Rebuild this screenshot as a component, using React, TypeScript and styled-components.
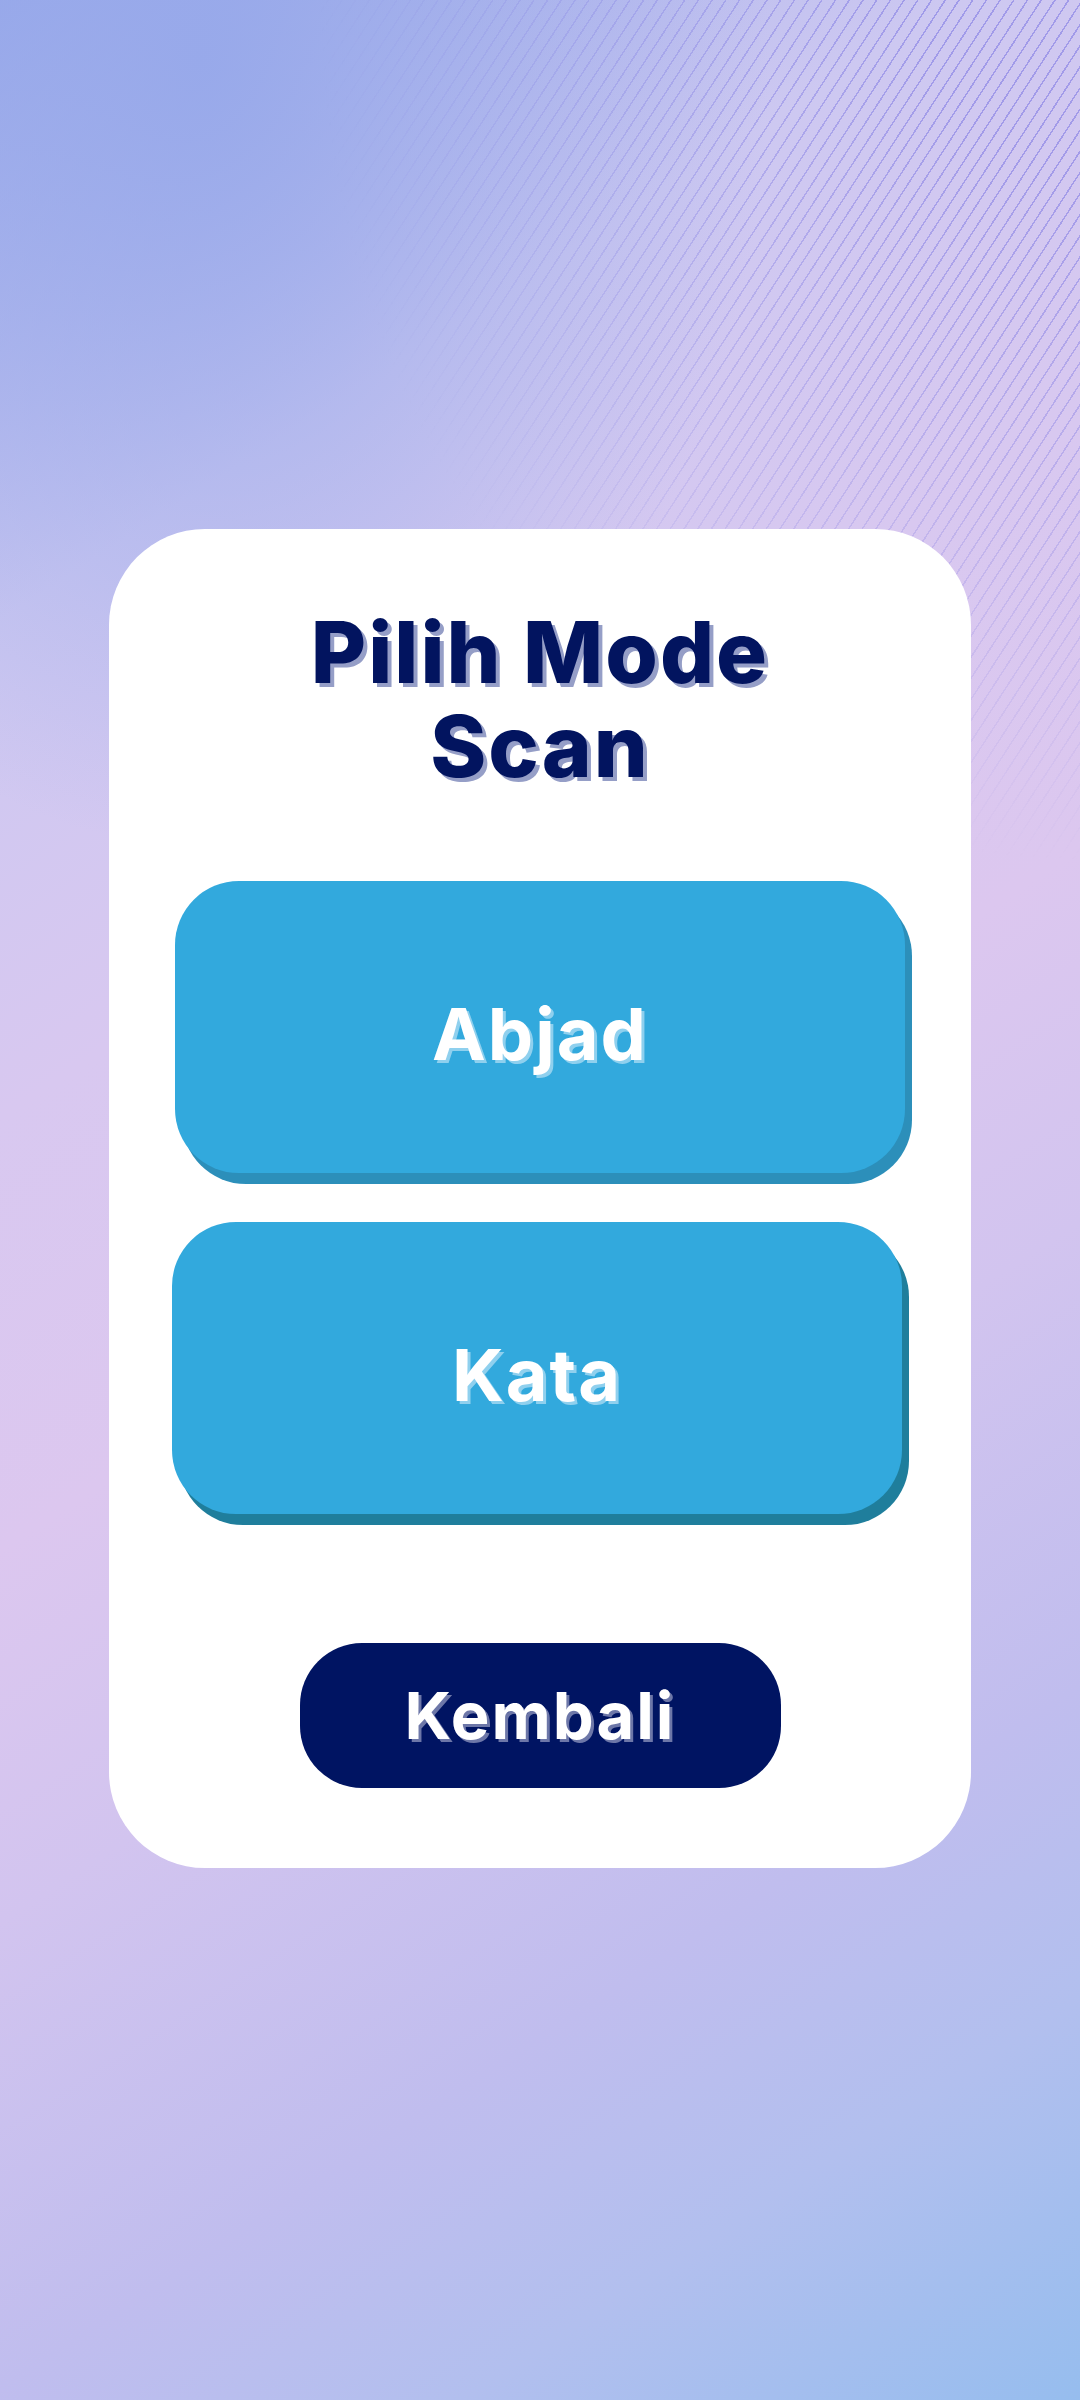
import { createGlobalStyle, styled } from 'styled-components';

const GlobalStyle = createGlobalStyle`
  * {
    box-sizing: border-box;
  }
  body {
    margin: 0;
    font-family: Inter, 'Noto Sans', sans-serif;
  }
`;

const modes = [
  { label: 'Abjad', shade: '#2c8fba', shift: 0 },
  { label: 'Kata', shade: '#1f7e9c', shift: -3 },
];

export default function App() {
  return (
    <>
      <GlobalStyle />
      <Page>
        <Card>
          <Title>Pilih Mode Scan</Title>
          <ModeList>
            {modes.map((mode) => (
              <ModeButton key={mode.label} type="button" $shade={mode.shade} $shift={mode.shift}>
                {mode.label}
              </ModeButton>
            ))}
          </ModeList>
          <BackButton type="button">Kembali</BackButton>
        </Card>
      </Page>
    </>
  );
}

const Page = styled.div`
  position: relative;
  min-height: 2400px;
  overflow: hidden;
  display: flex;
  flex-direction: column;
  align-items: center;
  padding-top: 529px;
  background:
    radial-gradient(
      ellipse 760px 1050px at 200px 60px,
      rgba(150, 168, 234, 0.9) 0%,
      rgba(150, 168, 234, 0.45) 38%,
      rgba(150, 168, 234, 0) 75%
    ),
    linear-gradient(
      147deg,
      #9aaaea 0%,
      #cdc8f1 20%,
      #d8c8f0 36%,
      #dcc7ef 50%,
      #d2c4ef 62%,
      #c0bdee 77%,
      #b2bfee 87%,
      #96bdee 100%
    );

  &::before {
    content: '';
    position: absolute;
    inset: 0;
    pointer-events: none;
    background: repeating-linear-gradient(
      123deg,
      transparent 0px,
      transparent 10px,
      rgba(124, 118, 226, 0.55) 10px,
      rgba(124, 118, 226, 0.55) 11.5px
    );
    mask-image: radial-gradient(ellipse 760px 860px at 100% 0%, #000 20%, transparent 100%);
    -webkit-mask-image: radial-gradient(ellipse 760px 860px at 100% 0%, #000 20%, transparent 100%);
  }
`;

const Card = styled.div`
  position: relative;
  width: 862px;
  height: 1339px;
  padding: 77px 66px 0;
  background: #ffffff;
  border-radius: 96px;
  display: flex;
  flex-direction: column;
  align-items: center;
`;

const Title = styled.h1`
  margin: 0;
  max-width: 560px;
  text-align: center;
  font-size: 85px;
  line-height: 94px;
  font-weight: 800;
  letter-spacing: 2px;
  color: #02145f;
  text-shadow: 4px 4px 0 #959ec7;
`;

const ModeList = styled.div`
  width: 100%;
  margin-top: 87px;
  display: flex;
  flex-direction: column;
  gap: 49px;
`;

const ModeButton = styled.button<{ $shade: string; $shift: number }>`
  width: 730px;
  height: 292px;
  margin-left: ${(props) => props.$shift}px;
  padding: 12px 0 0;
  border: none;
  border-radius: 64px;
  background: #32a9dd;
  box-shadow: 7px 11px 0 ${(props) => props.$shade};
  color: #ffffff;
  font-family: Inter, 'Noto Sans', sans-serif;
  font-size: 72px;
  font-weight: 700;
  letter-spacing: 2px;
  text-shadow: 3px 3px 0 #8fd0ee;
  cursor: pointer;
`;

const BackButton = styled.button`
  margin-top: 129px;
  width: 481px;
  height: 145px;
  border: none;
  border-radius: 62px;
  background: #001462;
  color: #ffffff;
  font-family: Inter, 'Noto Sans', sans-serif;
  font-size: 65px;
  font-weight: 700;
  letter-spacing: 2px;
  text-shadow: 3px 3px 0 #6d77a8;
  cursor: pointer;
`;
